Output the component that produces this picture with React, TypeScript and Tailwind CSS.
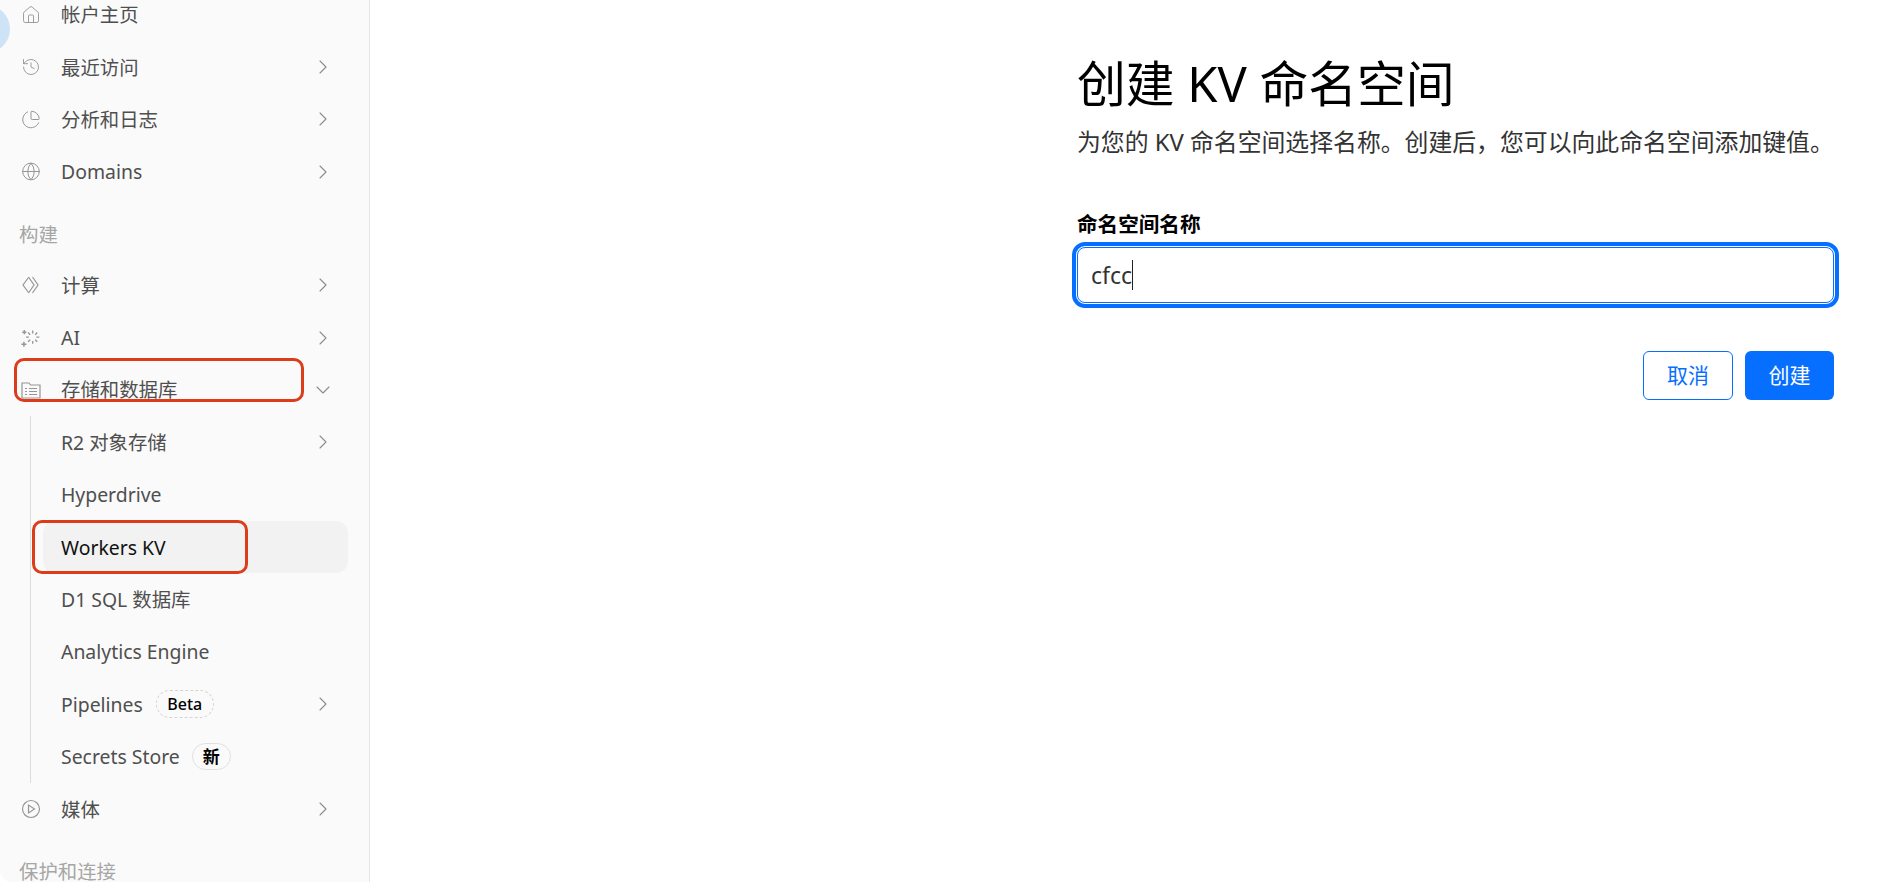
import { ChevronDown, ChevronRight, Globe, History, Home, PieChart } from 'lucide-react'
import type { ReactNode } from 'react'

const fontStack = '[font-family:"Noto_Sans","Noto_Sans_CJK_SC",sans-serif]'

function ComputeIcon() {
  return (
    <svg width="20" height="20" viewBox="0 0 20 20" fill="none" stroke="currentColor" strokeWidth="1.2">
      <path d="M7.500 2.500 2 10l5.500 7.500" />
      <path d="M7.500 2 13 10l-5.500 8" />
      <path d="M11.500 2 17 10l-5.500 8" />
    </svg>
  )
}

function AiIcon() {
  return (
    <svg width="24" height="24" viewBox="0 0 24 24" fill="none" stroke="currentColor" strokeWidth="1.6">
      <path d="M14 3v3.500M14 15.500V19M6 11h3.500M18.500 11H22M8.500 5.500 11 8M17 14l2.500 2.500M19.500 5.500 17 8M11 14l-2.500 2.500" />
      <path d="M4 2.500v5M1.500 5h5M3.500 16.500v6M.5 19.500h6" strokeWidth="1.800" />
    </svg>
  )
}

function StorageIcon() {
  return (
    <svg width="20" height="20" viewBox="0 0 20 20" fill="none" stroke="currentColor" strokeWidth="1.2">
      <path d="M1 18V3h7l1.500 2H19v13z" />
      <path d="M4 8.500h2M8 8.500h8M4 11.500h2M8 11.500h8M4 14.500h2M8 14.500h8" />
    </svg>
  )
}

function PlayIcon() {
  return (
    <svg width="20" height="20" viewBox="0 0 20 20" fill="none" stroke="currentColor" strokeWidth="1.2">
      <circle cx="10" cy="10" r="8.500" />
      <path d="M7.500 6v8l6-4z" />
    </svg>
  )
}

function NavRow({ icon, label, arrow = 'right' }: { icon: ReactNode; label: string; arrow?: 'right' | 'down' | 'none' }) {
  return (
    <div className="flex h-[52.4px] w-[348px] items-center pl-[21px] pr-[13px] text-[19.4px] text-[#4f4f4f]">
      <span className="flex w-[20px] justify-center text-[#969696]">{icon}</span>
      <span className="ml-[20px] flex-1">{label}</span>
      {arrow === 'right' && <ChevronRight size={24} strokeWidth={1.1} className="text-[#8c8c8c]" />}
      {arrow === 'down' && <ChevronDown size={24} strokeWidth={1.1} className="text-[#8c8c8c]" />}
    </div>
  )
}

function SubRow({ label, arrow, active, badge }: { label: string; arrow?: boolean; active?: boolean; badge?: ReactNode }) {
  return (
    <div className={`flex h-[52.4px] items-center rounded-xl pl-[18px] pr-[13px] text-[19.4px] ${active ? 'bg-[#f2f2f2] text-[#111]' : 'text-[#4f4f4f]'}`}>
      <span>{label}</span>
      {badge}
      <span className="flex-1" />
      {arrow && <ChevronRight size={24} strokeWidth={1.1} className="text-[#8c8c8c]" />}
    </div>
  )
}

function SectionTitle({ label }: { label: string }) {
  return <div className="flex h-[61px] items-center pl-[19px] pt-[11px] text-[19.4px] text-[#a6a6a6]">{label}</div>
}

export default function App() {
  return (
    <div className={`relative flex h-[882px] w-full overflow-hidden bg-white ${fontStack}`}>
      <aside className="h-full w-[370px] shrink-0 overflow-hidden rounded-bl-xl border-r border-[#e5e5e5] bg-[#fafafa]">
        <div className="mt-[-11.5px]">
          <NavRow icon={<Home size={24} strokeWidth={1.1} />} label="帐户主页" arrow="none" />
          <NavRow icon={<History size={24} strokeWidth={1.1} />} label="最近访问" />
          <NavRow icon={<PieChart size={21} strokeWidth={1.2} />} label="分析和日志" />
          <NavRow icon={<Globe size={21} strokeWidth={1.2} />} label="Domains" />
          <SectionTitle label="构建" />
          <NavRow icon={<ComputeIcon />} label="计算" />
          <NavRow icon={<AiIcon />} label="AI" />
          <NavRow icon={<StorageIcon />} label="存储和数据库" arrow="down" />
          <div className="ml-[30px] w-[318px] border-l border-[#dcdcdc] pl-[12px]">
            <SubRow label="R2 对象存储" arrow />
            <SubRow label="Hyperdrive" />
            <SubRow label="Workers KV" active />
            <SubRow label="D1 SQL 数据库" />
            <SubRow label="Analytics Engine" />
            <SubRow
              label="Pipelines"
              arrow
              badge={
                <span className="ml-[13px] flex h-[28px] w-[58px] items-center justify-center rounded-full border border-dashed border-[#d4d4d4] text-[16px] font-medium text-black">
                  Beta
                </span>
              }
            />
            <SubRow
              label="Secrets Store"
              badge={
                <span className="ml-[12px] flex h-[27px] w-[39px] items-center justify-center rounded-full border border-[#e0e0e0] text-[17px] font-bold text-black">
                  新
                </span>
              }
            />
          </div>
          <NavRow icon={<PlayIcon />} label="媒体" />
          <SectionTitle label="保护和连接" />
        </div>
      </aside>

      <main className="flex-1 pl-[707px] pt-[48px]">
        <div className="w-[757px]">
          <h1 className="text-[48.8px] leading-[70px] font-normal text-black">创建 KV 命名空间</h1>
          <p className="mt-[7px] text-[23.85px] leading-[34px] whitespace-nowrap text-[#333]">
            为您的 KV 命名空间选择名称。创建后，您可以向此命名空间添加键值。
          </p>
          <label className="mt-[51px] block text-[20.6px] leading-[28px] font-bold text-black">命名空间名称</label>
          <div className="mt-[9px] flex h-[56px] w-[757px] items-center rounded-[8px] border border-[#066fff] bg-white pl-[13px] text-[23px] text-[#333] outline-[4px] outline-offset-[1px] outline-[#066fff]">
            <span>cfcc</span>
            <span className="h-[30px] w-px bg-[#222]" />
          </div>
          <div className="mt-[48px] flex justify-end gap-[12px]">
            <button className="h-[49px] w-[90px] rounded-md border border-[#066fff] bg-white text-[21px] text-[#066fff]">取消</button>
            <button className="h-[49px] w-[89px] rounded-md bg-[#066fff] text-[21px] text-white">创建</button>
          </div>
        </div>
      </main>

      {/* red annotation frames drawn over the screenshot */}
      <div className="absolute top-[358px] left-[14px] h-[44px] w-[290px] rounded-[10px] border-[3px] border-[#dc3c1a]" />
      <div className="absolute top-[520px] left-[32px] h-[54px] w-[216px] rounded-[10px] border-[3px] border-[#dc3c1a]" />
      {/* blue blob at the window edge */}
      <div className="absolute top-[5px] left-[-38px] h-[48px] w-[48px] rounded-full bg-[#cfe3f7]" />
    </div>
  )
}
